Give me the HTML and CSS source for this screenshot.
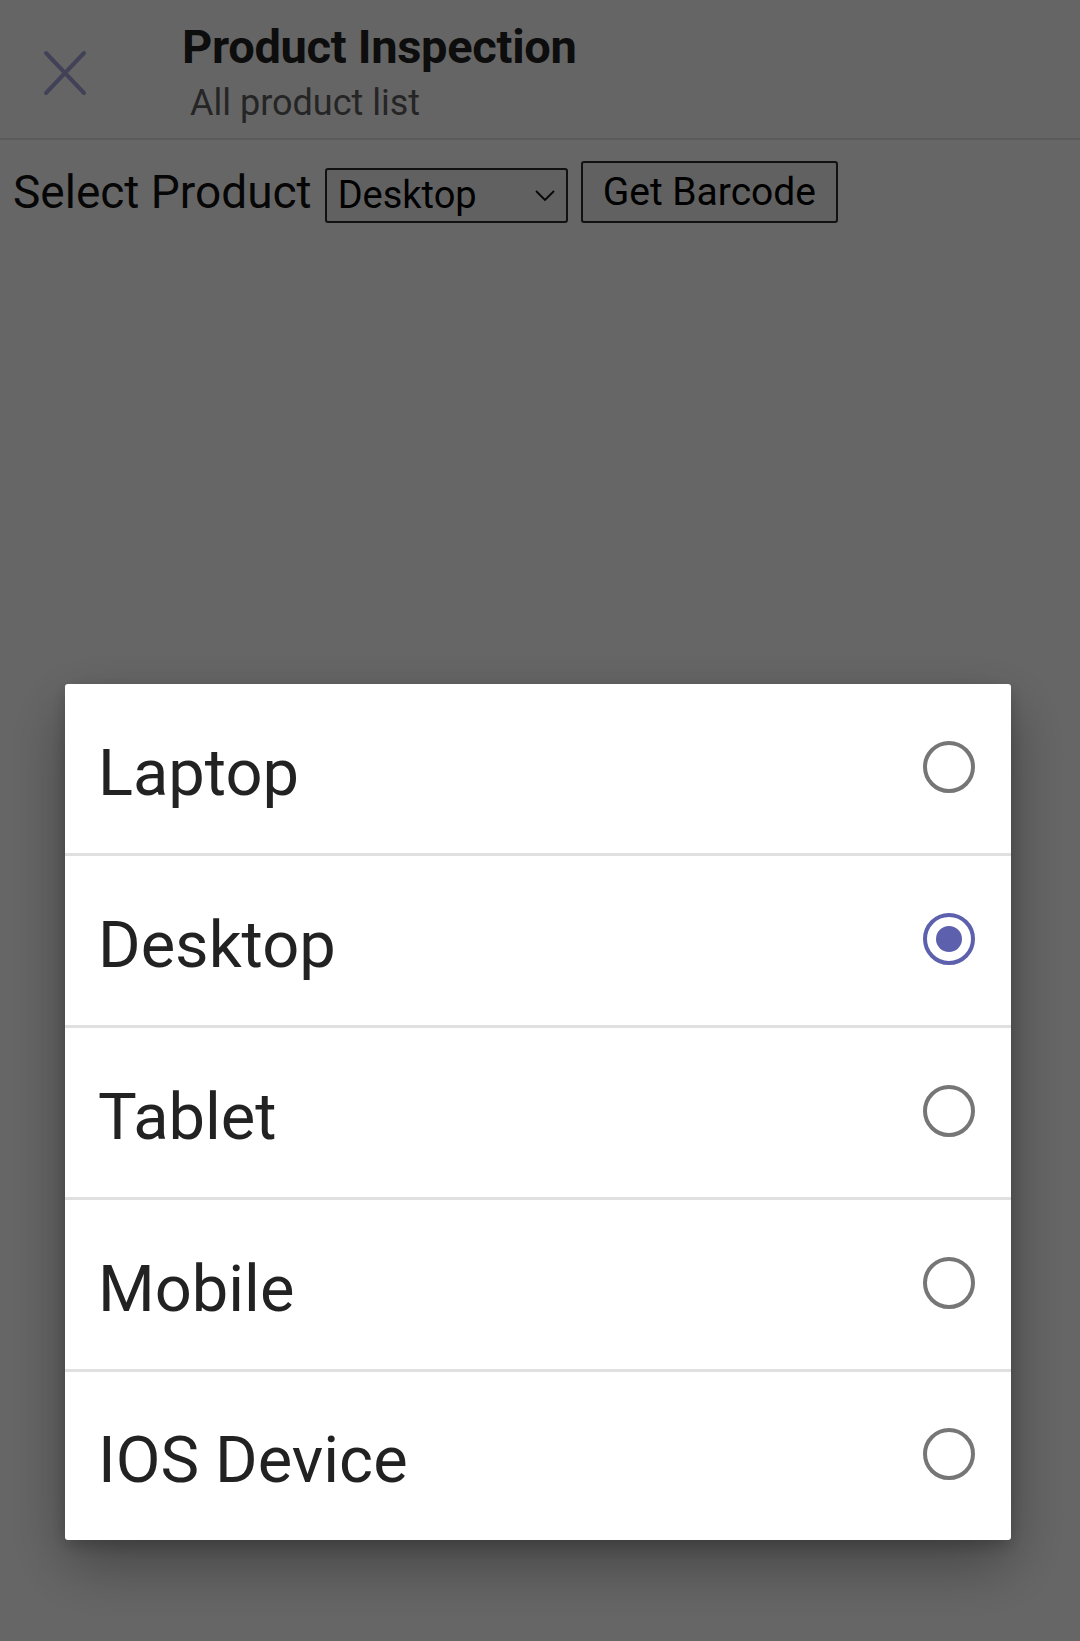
FILE: index.html
```html
<!DOCTYPE html>
<html lang="en">
<head>
<meta charset="utf-8">
<title>Product Inspection</title>
<link rel="stylesheet" href="styles.css">
</head>
<body>
<div class="page">
  <header class="header">
    <button class="close" aria-label="Close">
      <svg viewBox="0 0 44 46" width="44" height="46"><path d="M3 3 L41 43 M41 3 L3 43" stroke="currentColor" stroke-width="4" fill="none" stroke-linecap="round"/></svg>
    </button>
    <div class="titles">
      <div class="title">Product Inspection</div>
      <div class="subtitle">All product list</div>
    </div>
  </header>
  <div class="toolbar">
    <label class="label" for="product">Select Product</label>
    <div class="select-wrap">
      <select id="product" class="select">
        <option>Laptop</option>
        <option selected>Desktop</option>
        <option>Tablet</option>
        <option>Mobile</option>
        <option>IOS Device</option>
      </select>
      <svg class="chevron" viewBox="0 0 20 12" width="20" height="12"><path d="M1 1 L10 10 L19 1" stroke="currentColor" stroke-width="1.8" fill="none"/></svg>
    </div>
    <button class="btn">Get Barcode</button>
  </div>
</div>

<div class="overlay">
  <div class="dialog" role="radiogroup">
    <div class="row"><span class="opt">Laptop</span><span class="radio"></span></div>
    <div class="row"><span class="opt">Desktop</span><span class="radio checked"></span></div>
    <div class="row"><span class="opt">Tablet</span><span class="radio"></span></div>
    <div class="row"><span class="opt">Mobile</span><span class="radio"></span></div>
    <div class="row"><span class="opt">IOS Device</span><span class="radio"></span></div>
  </div>
</div>
</body>
</html>
```

FILE: styles.css
```css
* { box-sizing: border-box; }
html, body { margin: 0; padding: 0; }
body {
  width: 1080px;
  height: 1641px;
  background: #ffffff;
  font-family: Roboto, "Liberation Sans", sans-serif;
  overflow: hidden;
}

.page { height: 100%; }

.header {
  height: 140px;
  display: flex;
  align-items: flex-start;
  background: #fcfcfc;
  border-bottom: 2px solid #e4e4e4;
}
.close {
  width: 44px;
  height: 46px;
  margin: 50px 0 0 43px;
  padding: 0;
  border: 0;
  background: none;
  color: #a4a6dc;
  display: flex;
}
.titles {
  margin-left: 95px;
  padding-top: 20px;
}
.title {
  font-size: 47px;
  font-weight: 700;
  color: #222;
  line-height: 54px;
  letter-spacing: -0.3px;
}
.subtitle {
  font-size: 36px;
  color: #5e5e5e;
  line-height: 44px;
  margin-left: 8px;
  margin-top: 7px;
}

.toolbar {
  display: flex;
  align-items: center;
  gap: 13px;
  padding: 21px 0 0 13px;
}
.label {
  font-size: 46px;
  color: #111;
  line-height: 56px;
}
.select-wrap {
  position: relative;
  display: flex;
}
.select {
  appearance: none;
  -webkit-appearance: none;
  width: 243px;
  height: 55px;
  margin-top: 6px;
  border: 2px solid #2c2c2c;
  border-radius: 3px;
  background: #f2f2f2;
  font-family: Roboto, "Liberation Sans", sans-serif;
  font-size: 38px;
  color: #000;
  padding: 0 0 0 11px;
  line-height: 51px;
}
.chevron {
  position: absolute;
  right: 13px;
  top: 28px;
  color: #111;
  pointer-events: none;
}
.btn {
  height: 62px;
  padding: 0 20px;
  border: 2px solid #2c2c2c;
  border-radius: 3px;
  background: #f2f2f2;
  font-family: Roboto, "Liberation Sans", sans-serif;
  font-size: 39px;
  color: #000;
  line-height: 58px;
}

.overlay {
  position: fixed;
  inset: 0;
  background: rgba(0, 0, 0, 0.6);
  display: flex;
  flex-direction: column;
  justify-content: flex-end;
  padding: 0 69px 101px 65px;
}
.dialog {
  background: #fff;
  border-radius: 3px;
  box-shadow: 0 24px 60px rgba(0, 0, 0, 0.35), 0 6px 16px rgba(0, 0, 0, 0.2);
}
.row {
  height: 172px;
  display: flex;
  align-items: center;
  justify-content: space-between;
  padding: 0 36px 0 33px;
  border-bottom: 3px solid #e0e0e0;
}
.row:last-child { border-bottom: 0; height: 168px; }
.opt {
  font-size: 65px;
  color: #222;
  padding-top: 8px;
}
.radio {
  width: 52px;
  height: 52px;
  margin-top: -4px;
  border-radius: 50%;
  border: 4px solid #767676;
  display: flex;
  align-items: center;
  justify-content: center;
}
.radio.checked {
  border-color: #5d60ad;
}
.radio.checked::after {
  content: "";
  width: 26px;
  height: 26px;
  border-radius: 50%;
  background: #5d60ad;
}
```
